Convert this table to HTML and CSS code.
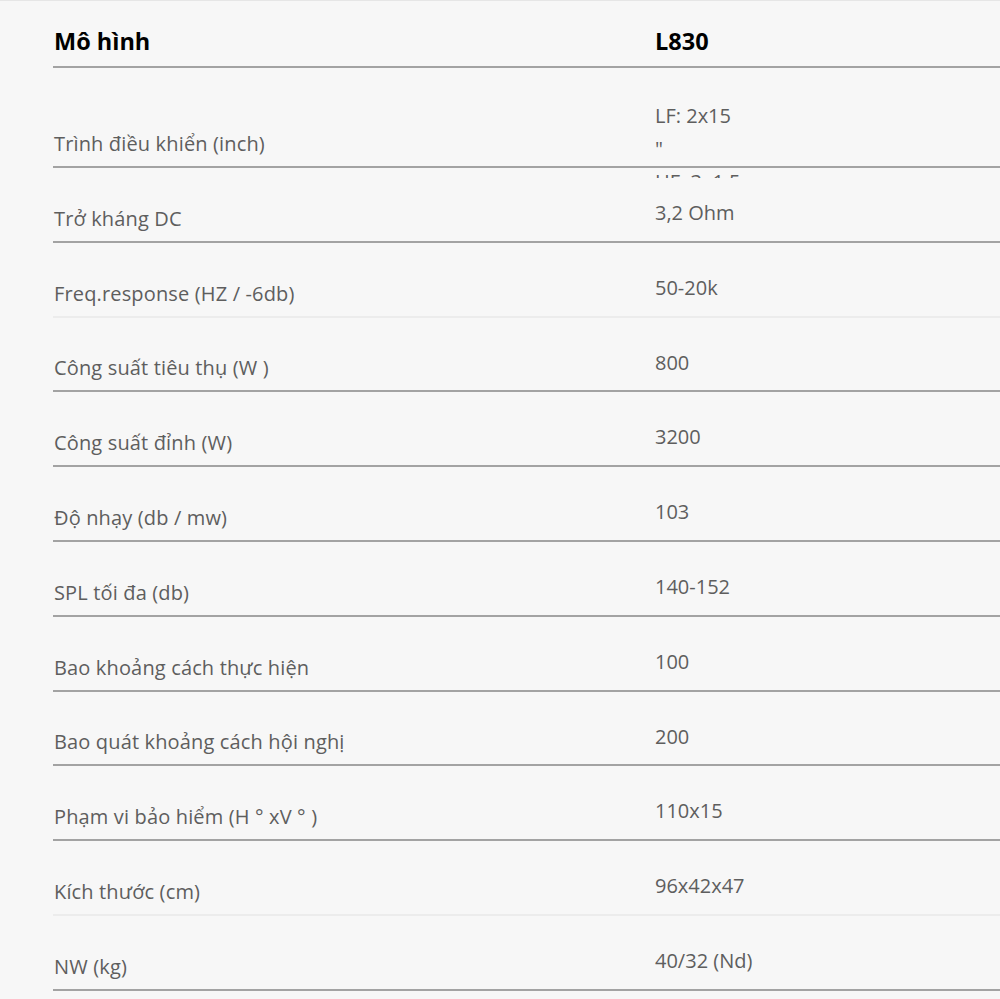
FILE: index.html
```html
<!DOCTYPE html>
<html lang="vi">
<head>
<meta charset="utf-8">
<title>L830</title>
<link rel="stylesheet" href="styles.css">
</head>
<body>
<div class="spec">
  <div class="row head"><div class="label">Mô hình</div><div class="value">L830</div></div>
  <div class="row first"><div class="label">Trình điều khiển (inch)</div><div class="value multi">LF: 2x15<br>"<br>HF: 3x1.5</div></div>
  <div class="row"><div class="label">Trở kháng DC</div><div class="value">3,2 Ohm</div></div>
  <div class="row light"><div class="label">Freq.response (HZ / -6db)</div><div class="value">50-20k</div></div>
  <div class="row"><div class="label">Công suất tiêu thụ (W )</div><div class="value">800</div></div>
  <div class="row"><div class="label">Công suất đỉnh (W)</div><div class="value">3200</div></div>
  <div class="row"><div class="label">Độ nhạy (db / mw)</div><div class="value">103</div></div>
  <div class="row"><div class="label">SPL tối đa (db)</div><div class="value">140-152</div></div>
  <div class="row"><div class="label">Bao khoảng cách thực hiện</div><div class="value">100</div></div>
  <div class="row"><div class="label">Bao quát khoảng cách hội nghị</div><div class="value">200</div></div>
  <div class="row"><div class="label">Phạm vi bảo hiểm (H ° xV ° )</div><div class="value">110x15</div></div>
  <div class="row light"><div class="label">Kích thước (cm)</div><div class="value">96x42x47</div></div>
  <div class="row"><div class="label">NW (kg)</div><div class="value">40/32 (Nd)</div></div>
</div>
</body>
</html>
```
FILE: styles.css
```css
html, body {
  margin: 0;
  padding: 0;
  background: #f7f7f7;
}
body {
  border-top: 1px solid #e6e6e6;
  font-family: "Open Sans", "Noto Sans", sans-serif;
  font-size: 20px;
  line-height: 30px;
  color: #5e5e5e;
  overflow: hidden;
  height: 998px;
}
.spec {
  margin-left: 53px;
}
.row {
  display: grid;
  grid-template-columns: 602px 1fr;
  grid-template-rows: minmax(0, 1fr);
  box-sizing: border-box;
  height: 74.8px;
  border-bottom: 2px solid #a3a3a3;
}
.row.light {
  border-bottom-color: #ececec;
}
.row.head {
  height: 67px;
  color: #000;
  font-weight: 700;
  font-size: 23.5px;
}
.row.first {
  height: 100px;
}
.label {
  align-self: end;
  padding-bottom: 7px;
  padding-left: 1px;
  letter-spacing: 0.15px;
}
.value {
  align-self: start;
  padding-top: 30px;
}
.head .label {
  padding-bottom: 10px;
  letter-spacing: 0;
}
.head .value {
  align-self: end;
  padding-bottom: 10px;
}
.value.multi {
  padding-top: 31px;
  line-height: 33px;
  height: 110px;
  box-sizing: border-box;
  overflow: hidden;
}
```
